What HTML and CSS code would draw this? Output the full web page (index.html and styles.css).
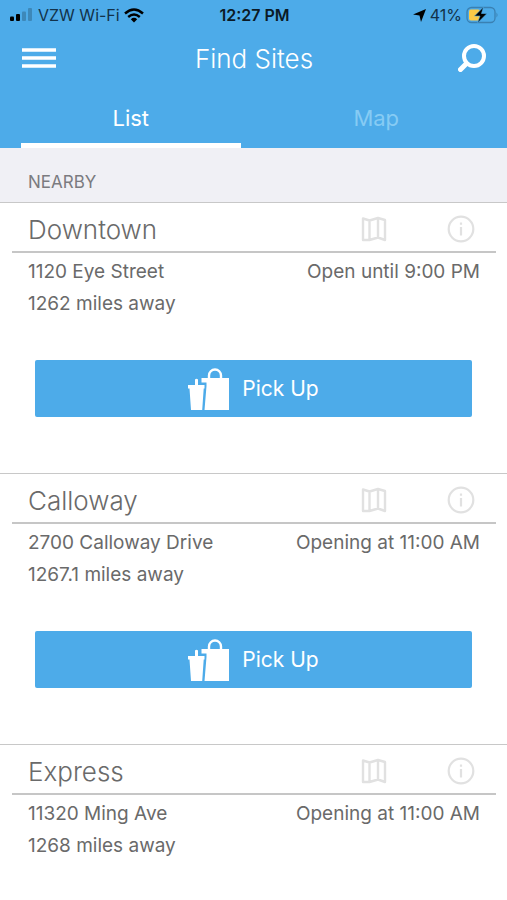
FILE: index.html
```html
<!DOCTYPE html>
<html lang="en">
<head>
<meta charset="utf-8">
<meta name="viewport" content="width=device-width, initial-scale=1">
<title>Find Sites</title>
<link rel="stylesheet" href="styles.css">
</head>
<body>
<svg class="sprite" aria-hidden="true">
  <symbol id="map" viewBox="0 0 26 26">
    <path d="M2 2.500 L8.500 4.500 L17 2 L24 4 V24 L17 21.500 L8.500 24 L2 24 Z M8.500 4 V23 M17 2.500 V22" fill="none" stroke="currentColor" stroke-width="2.400" stroke-linejoin="round"/>
  </symbol>
  <symbol id="info" viewBox="0 0 28 28">
    <circle cx="14" cy="14" r="12.3" fill="none" stroke="currentColor" stroke-width="2.200"/>
    <path d="M14 12 V20.5 M14 7.5 V9.7" stroke="currentColor" stroke-width="2.200"/>
  </symbol>
  <symbol id="bag" viewBox="0 0 42 42">
    <path d="M21 11 V7.500 a6 6 0 0 1 12 0 V11" fill="none" stroke="currentColor" stroke-width="2.400"/>
    <path d="M13.500 10 H41 V42 H16.500 L18.500 18 V14.500 H13.500 Z" fill="currentColor"/>
    <path d="M0 17 H7 V11.500 Q8.500 10 10 11.500 V17 H16.500 V20.500 H15.700 L14.200 42 H3 L1.500 20.500 H0 Z" fill="currentColor"/>
  </symbol>
</svg>
<header class="header">
  <div class="status">
    <div class="carrier">
      <svg width="24" height="14" viewBox="0 0 24 14" aria-hidden="true">
        <rect x="0" y="8.500" width="4" height="4.500" rx="1"/>
        <rect x="6" y="6" width="4" height="7" rx="1"/>
        <g opacity=".2"><rect x="12" y="3.500" width="4" height="9.500" rx="1"/><rect x="18" y="0" width="4" height="13" rx="1"/></g>
      </svg>
      <span>VZW Wi-Fi</span>
      <svg width="20" height="15" viewBox="0 0 20 15" aria-hidden="true">
        <path d="M1 5.500 Q10 -2.500 19 5.500 M4.200 9 Q10 4 15.800 9" fill="none" stroke="#000" stroke-width="2.400"/>
        <path d="M6.800 11.200 Q10 8.500 13.200 11.200 L10 14.500 Z"/>
      </svg>
    </div>
    <time class="clock">12:27 PM</time>
    <div class="power">
      <svg width="13" height="13" viewBox="0 0 13 13" aria-hidden="true"><path d="M13 0 L8 13 L6.500 6.500 L0 5.500 Z"/></svg>
      <span>41%</span>
      <svg width="33" height="18" viewBox="0 0 33 18" aria-hidden="true">
        <rect x="1" y="1.500" width="28" height="15" rx="4.500" fill="none" stroke="#3a80b2" stroke-width="1.300"/>
        <path d="M30.500 6.500 q2 2.500 0 5 Z" fill="#3a80b2"/>
        <rect x="3" y="3.500" width="11" height="11" rx="2" fill="#fcca46"/>
        <path d="M17.500 1 L8.500 10 H14 L11.500 17 L21 7.500 H15.500 Z" stroke="#4dabe9" stroke-width=".6"/>
      </svg>
    </div>
  </div>
  <div class="nav">
    <button class="icon-button" type="button" aria-label="Menu">
      <svg width="34" height="20" viewBox="0 0 34 20" aria-hidden="true"><path d="M0 2 H34 M0 10 H34 M0 18 H34" stroke="#fff" stroke-width="3.400"/></svg>
    </button>
    <h1 class="title">Find Sites</h1>
    <button class="icon-button search" type="button" aria-label="Search">
      <svg width="28" height="28" viewBox="0 0 28 28" aria-hidden="true"><circle cx="16" cy="12" r="10" fill="none" stroke="#fff" stroke-width="4"/><path d="M8.500 19.500 L2.500 25.500" stroke="#fff" stroke-width="5" stroke-linecap="round"/></svg>
    </button>
  </div>
  <nav class="tabs">
    <button class="tab active" type="button">List</button>
    <button class="tab" type="button">Map</button>
  </nav>
</header>
<main>
  <h2 class="section">NEARBY</h2>
  <article class="site">
    <div class="site-head">
      <h3>Downtown</h3>
      <button class="icon-button" type="button" aria-label="Map"><svg width="26" height="26"><use href="#map"/></svg></button>
      <button class="icon-button" type="button" aria-label="Details"><svg width="28" height="28"><use href="#info"/></svg></button>
    </div>
    <div class="details">
      <p><span>1120 Eye Street</span><span>Open until 9:00 PM</span></p>
      <p>1262 miles away</p>
    </div>
    <button class="pickup" type="button"><svg width="42" height="42" aria-hidden="true"><use href="#bag"/></svg>Pick Up</button>
  </article>
  <article class="site">
    <div class="site-head">
      <h3>Calloway</h3>
      <button class="icon-button" type="button" aria-label="Map"><svg width="26" height="26"><use href="#map"/></svg></button>
      <button class="icon-button" type="button" aria-label="Details"><svg width="28" height="28"><use href="#info"/></svg></button>
    </div>
    <div class="details">
      <p><span>2700 Calloway Drive</span><span>Opening at 11:00 AM</span></p>
      <p>1267.1 miles away</p>
    </div>
    <button class="pickup" type="button"><svg width="42" height="42" aria-hidden="true"><use href="#bag"/></svg>Pick Up</button>
  </article>
  <article class="site">
    <div class="site-head">
      <h3>Express</h3>
      <button class="icon-button" type="button" aria-label="Map"><svg width="26" height="26"><use href="#map"/></svg></button>
      <button class="icon-button" type="button" aria-label="Details"><svg width="28" height="28"><use href="#info"/></svg></button>
    </div>
    <div class="details">
      <p><span>11320 Ming Ave</span><span>Opening at 11:00 AM</span></p>
      <p>1268 miles away</p>
    </div>
  </article>
</main>
</body>
</html>
```
FILE: styles.css
```css
* {
  box-sizing: border-box;
}

body {
  margin: 0;
  background: #fff;
  color: #6a6a6a;
  font-family: Inter, "Liberation Sans", sans-serif;
  font-size: 19px;
}

h1, h2, h3, p {
  margin: 0;
  font-weight: 400;
}

button {
  padding: 0;
  border: 0;
  background: none;
  color: inherit;
  font: inherit;
}

svg {
  display: block;
  flex: none;
}

.sprite {
  display: none;
}

.header {
  background: #4dabe9;
  color: #fff;
}

.status,
.nav {
  display: grid;
  grid-template-columns: 1fr auto 1fr;
  align-items: center;
}

.status {
  height: 30px;
  padding: 0 8px 0 10px;
  color: #12324a;
  font-size: 16px;
}

.carrier,
.power {
  display: flex;
  align-items: center;
  gap: 4px;
}

.power {
  justify-content: flex-end;
}

.clock {
  color: #0b1a26;
  font-weight: 600;
}

.nav {
  height: 56px;
  padding: 0 21px 0 22px;
}

.nav .search {
  justify-self: end;
}

.title {
  font-size: 26px;
  font-weight: 300;
}

.icon-button {
  display: flex;
  justify-self: start;
}

.tabs {
  display: grid;
  grid-template-columns: 1fr 1fr;
  gap: 26px;
  padding: 0 21px;
}

.tab {
  height: 62px;
  padding-top: 6px;
  border-bottom: 5px solid transparent;
  color: #86cbf4;
  font-size: 22px;
}

.tab.active {
  border-bottom-color: #fff;
  color: #fff;
}

.section {
  height: 54px;
  padding: 8px 28px 0;
  background: #f0f0f5;
  color: #7b7b80;
  font-size: 17px;
  line-height: 52px;
}

.site {
  border-top: 1px solid #c8c8c8;
}

.site-head {
  display: grid;
  grid-template-columns: 1fr 86px 28px;
  align-items: center;
  height: 50px;
  margin: 0 11px 0 12px;
  padding: 4px 21px 0 16px;
  border-bottom: 2px solid #c6c6c6;
}

.site-head h3 {
  font-size: 26px;
  font-weight: 300;
}

.site-head .icon-button {
  color: #e1e1e1;
}

.details {
  padding: 3px 27px 0 28px;
  line-height: 32px;
}

.details p {
  display: flex;
  justify-content: space-between;
}

.pickup {
  display: flex;
  align-items: center;
  justify-content: center;
  gap: 12px;
  width: calc(100% - 70px);
  height: 57px;
  margin: 40px 35px 56px;
  border-radius: 2px;
  background: #4dabe9;
  color: #fff;
  font-size: 21px;
}
```
